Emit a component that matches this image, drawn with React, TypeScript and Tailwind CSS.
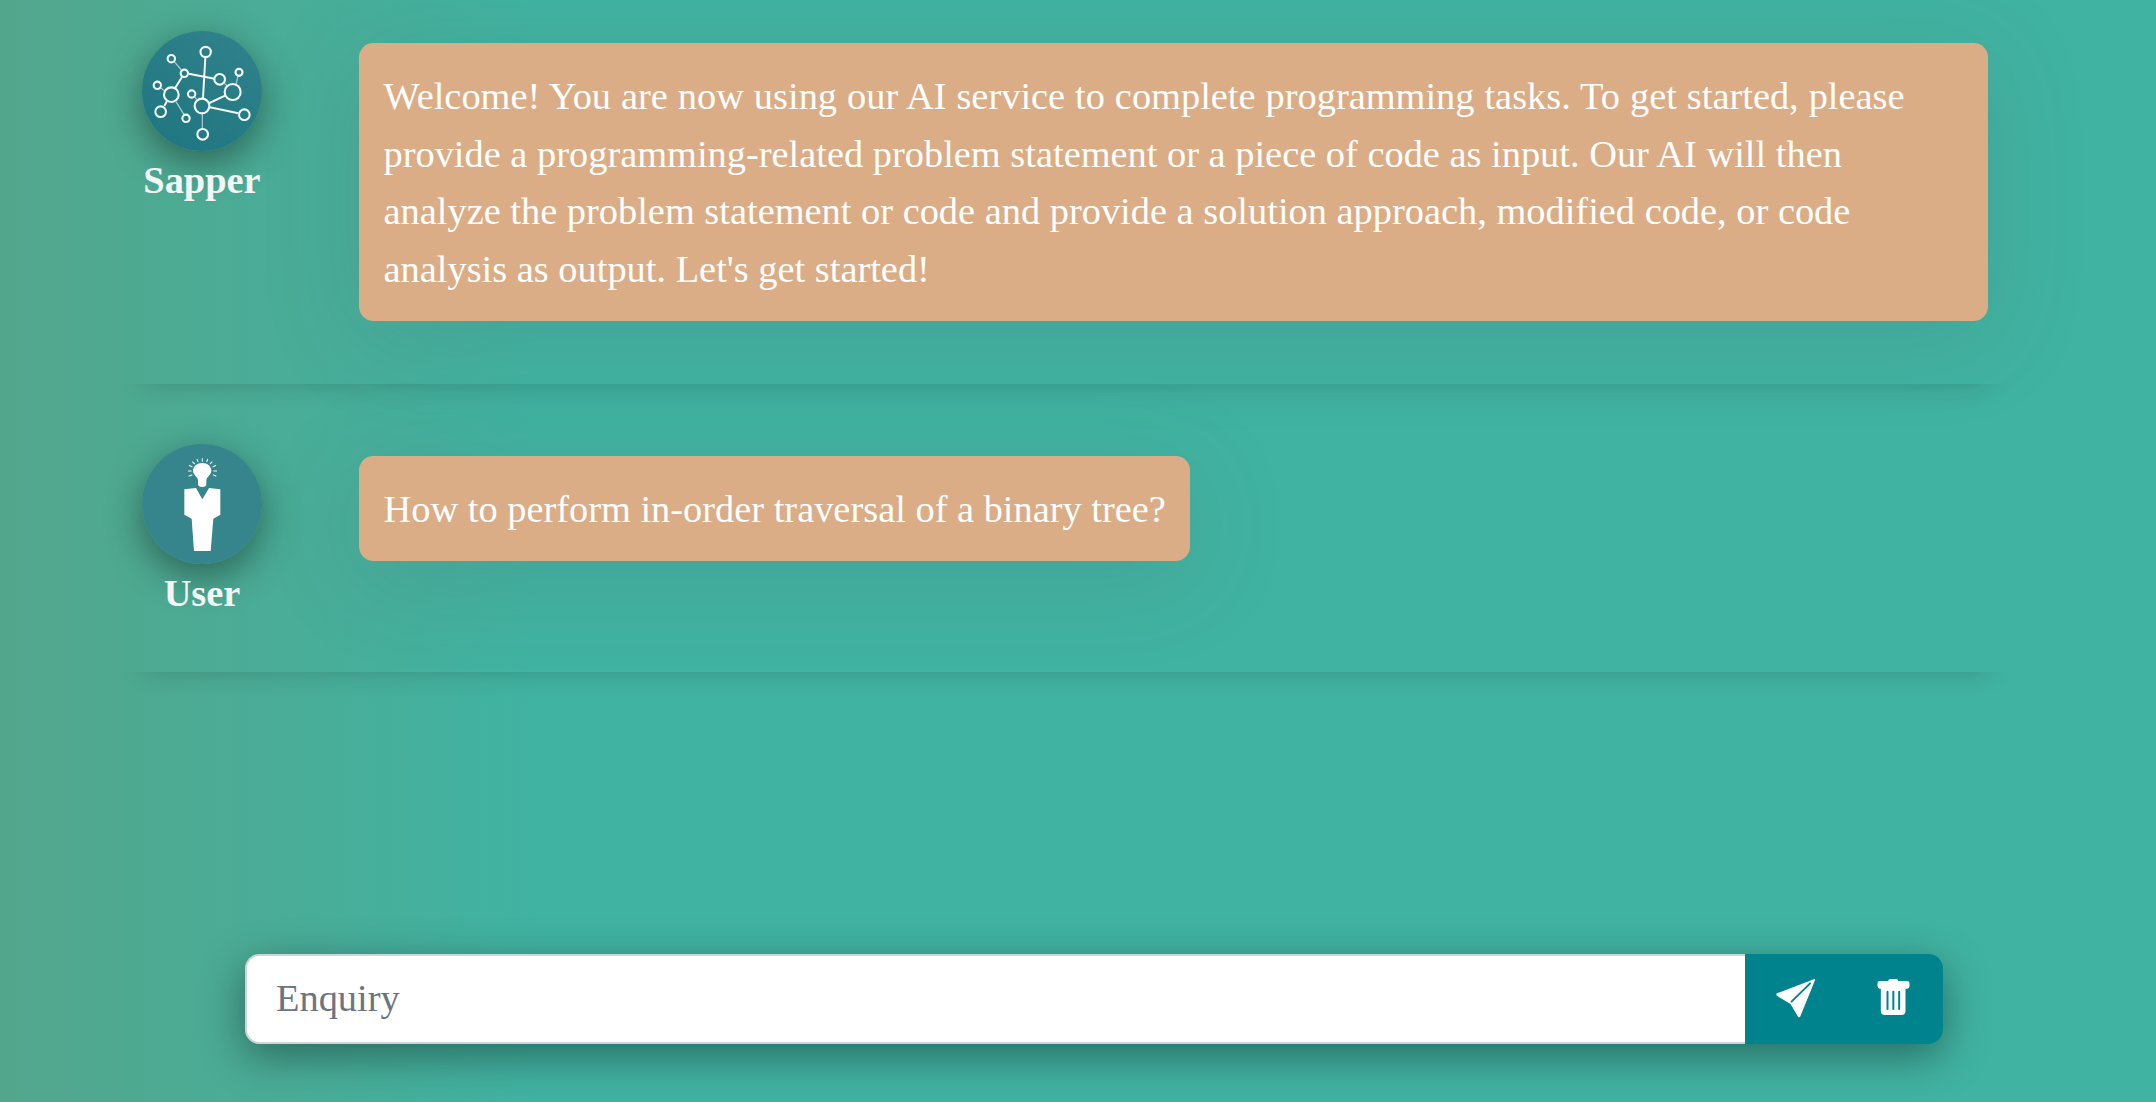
import type { ReactNode } from "react";

function NetworkAvatar() {
  return (
    <svg viewBox="66 63 360 360" className="size-full" fill="none" stroke="#f4fafa">
      <defs>
        <linearGradient id="sapperFill" x1="0.2" y1="1" x2="0.8" y2="0">
          <stop offset="0" stopColor="#1f7681" />
          <stop offset="1" stopColor="#30828b" />
        </linearGradient>
      </defs>
      <circle cx="246" cy="243" r="180" fill="url(#sapperFill)" stroke="none" />
      <g strokeWidth="6">
        <path d="M256 143 249 264M206 191 284 206M186 201 166 233M141 273 133 288M268 279 317 256M270 292 355 310" />
      </g>
      <g strokeWidth="3.6" stroke="#a9ced1">
        <path d="M163 155 184 180M122 234 134 242M168 275 192 314M223 260 230 268M247 311V356M313 220 322 228M354 198 348 223" />
      </g>
      <g strokeWidth="6.3">
        <circle cx="257" cy="126" r="15.5" />
        <circle cx="154" cy="146" r="11" />
        <circle cx="193" cy="190" r="11" />
        <circle cx="112" cy="226" r="11" />
        <circle cx="154" cy="254" r="22" />
        <circle cx="122" cy="305" r="16" />
        <circle cx="198" cy="325" r="11" />
        <circle cx="215" cy="252" r="11" />
        <circle cx="246" cy="288" r="22" />
        <circle cx="248" cy="373" r="16" />
        <circle cx="299" cy="208" r="16" />
        <circle cx="338" cy="246" r="24" />
        <circle cx="357" cy="187" r="10.5" />
        <circle cx="373" cy="314" r="16" />
      </g>
    </svg>
  );
}

function PersonAvatar() {
  return (
    <svg viewBox="66 72 360 360" className="size-full" fill="#fff">
      <circle cx="246" cy="252" r="180" fill="#36858d" />
      <path d="M247 129c-16 0-28 10-28 23 0 13 15 19 15 29v12c0 5 5 8 13 8s12-3 12-8v-12c0-10 15-16 15-29 0-13-11-23-27-23Z" />
      <path
        d="M247 125V115M234 126 231 117M260 126 263 117M224 132 217 125M270 132 277 125M217 141 207 136M278 141 288 136M215 153H204M280 153H291M217 164 206 169M279 164 289 169"
        stroke="#eef6f6"
        strokeWidth="3.2"
      />
      <path d="M193 208 228 204 247 238 267 204 301 208V284L280 296 272 393H222L215 296 193 284Z" />
    </svg>
  );
}

function SendIcon() {
  return (
    <svg viewBox="223.5 177 120 120" className="size-10 overflow-visible" fill="#fff">
      <path d="M229 220 340 177.500Q345 176 343.500 181L299 290Q296 293 292.500 290L270 252 229 227Q226 223.500 229 220Z" />
      <path d="M273 245 329 190" stroke="#00838d" strokeWidth="5.500" strokeLinecap="round" />
    </svg>
  );
}

function TrashIcon() {
  return (
    <svg viewBox="520.5 177 120 120" className="size-10 overflow-visible" fill="#fff">
      <path d="M569 177h19q4 0 5 6h27q7 0 7 7v9q0 7-7 7h-5v67q0 12-12 12h-50q-12 0-12-12v-67h-3q-7 0-7-7v-9q0-7 7-7h25q1-6 6-6Z" />
      <path d="M561 215V267M578.500 215V267M596 215V267" stroke="#00838d" strokeWidth="6" strokeLinecap="round" />
    </svg>
  );
}

type MessageProps = { name: string; avatar: ReactNode; children: ReactNode; className: string };

function Message({ name, avatar, children, className }: MessageProps) {
  return (
    <section
      className={`mr-[144px] ml-[118px] flex items-start px-6 shadow-[0_24px_24px_-24px_rgba(0,0,0,0.18)] ${className}`}
    >
      <div className="flex w-[120px] shrink-0 flex-col items-center">
        <div className="size-[120px] rounded-full shadow-[0_12px_38px_rgba(0,0,0,0.42)]">{avatar}</div>
        <h2 className="pt-px text-[38.4px] leading-[57.6px] font-bold text-[#f4f5f5]">{name}</h2>
      </div>
      <p className="mt-3 ml-[97px] rounded-[14.4px] bg-[#dbad86] pt-[25px] pr-6 pb-[22.6px] pl-[24.5px] text-[38.4px] leading-[57.6px] text-white shadow-[0_16px_96px_rgba(85,85,85,0.17)]">
        {children}
      </p>
    </section>
  );
}

export default function App() {
  return (
    <main className="flex h-[1102px] flex-col overflow-hidden bg-[linear-gradient(to_right,#53a68c_0px,#41b3a2_535px)] font-['Liberation_Serif',serif]">
      <Message name="Sapper" avatar={<NetworkAvatar />} className="h-[384px] shrink-0 pt-[31px]">
        <span className="[word-spacing:0.34px]">
          Welcome! You are now using our AI service to complete programming tasks. To get started, please
        </span>{" "}
        provide a programming-related problem statement or a piece of code as input. Our AI will then
        <br />
        analyze the problem statement or code and provide a solution approach, modified code, or code
        analysis as output. Let's get started!
      </Message>
      <Message name="User" avatar={<PersonAvatar />} className="h-[288px] shrink-0 pt-[60px]">
        How to perform in-order traversal of a binary tree?
      </Message>
      <form
        className="mt-auto mr-[213px] mb-[58px] ml-[245px] flex h-[90px] rounded-[14.4px] shadow-[0_12px_44px_rgba(0,0,0,0.4)]"
        onSubmit={(event) => event.preventDefault()}
      >
        <input
          aria-label="Enquiry"
          placeholder="Enquiry"
          className="min-w-0 flex-1 rounded-l-[14.4px] border-2 border-r-0 border-[#ced4da] bg-white pl-[29px] text-[38.4px] text-gray-800 outline-none placeholder:text-[#6c757d]"
        />
        <div className="flex w-[198px] overflow-hidden rounded-r-[14.4px] bg-[#00838d]">
          <button type="submit" aria-label="Send" className="flex flex-1 items-center justify-center">
            <SendIcon />
          </button>
          <button type="button" aria-label="Clear" className="flex flex-1 items-center justify-center">
            <TrashIcon />
          </button>
        </div>
      </form>
    </main>
  );
}
